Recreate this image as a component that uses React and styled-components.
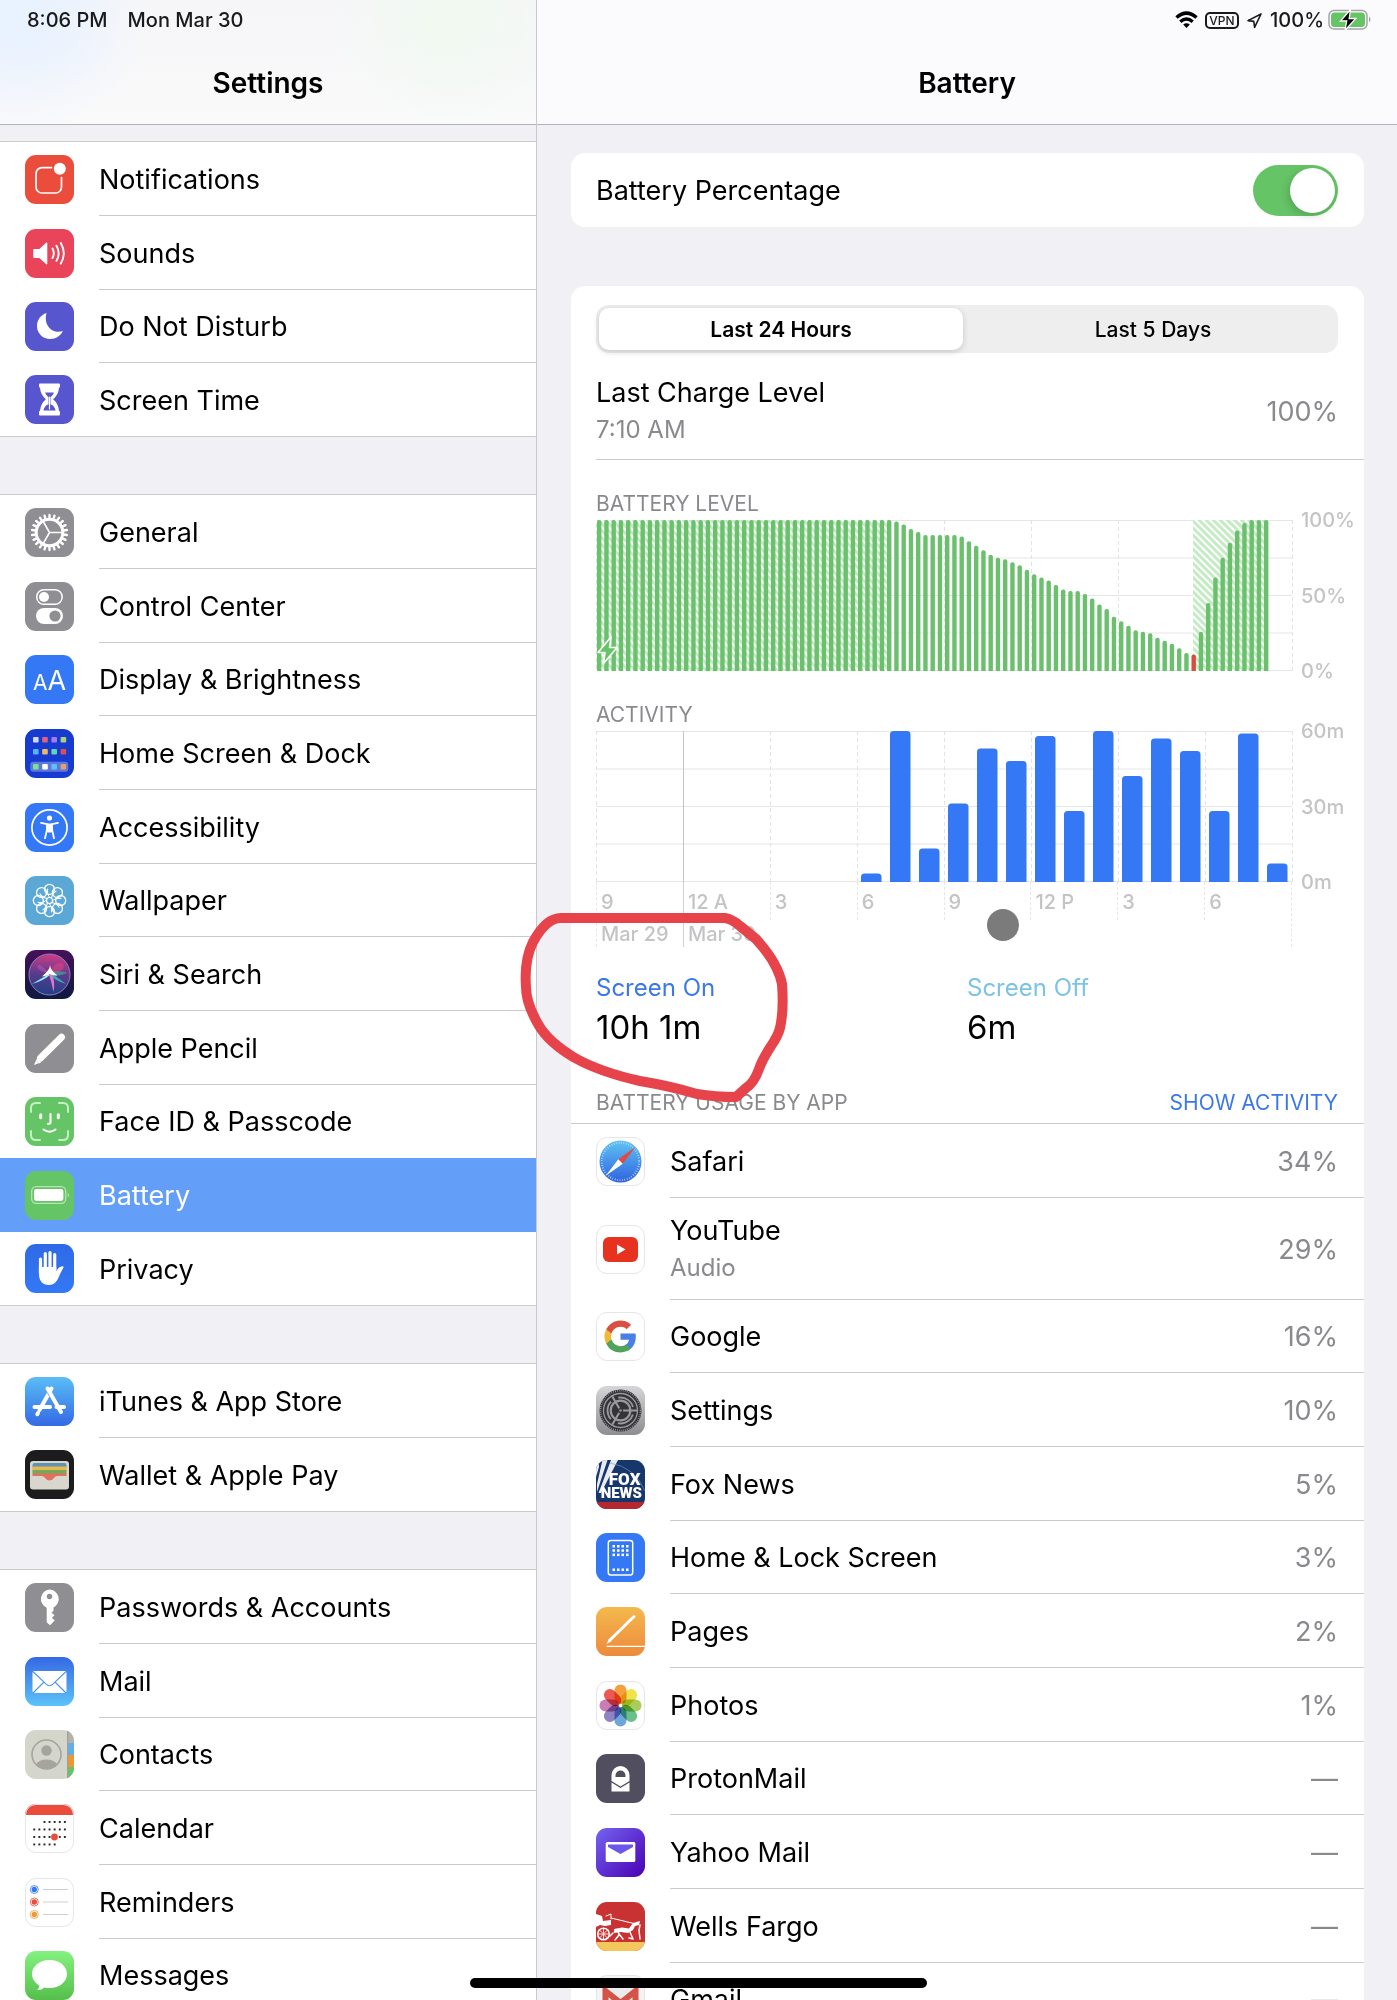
import React, { useState } from 'react';
import styled, { createGlobalStyle, css } from 'styled-components';

const color = {
  page: '#f0f0f5',
  line: '#cbcbce',
  headerLine: '#b3b2b8',
  text: '#000',
  muted: '#8a8a8e',
  axis: '#c4c4c6',
  blue: '#3478f6',
  link: '#3b78e7',
  sky: '#7cc3e6',
  green: '#65c466',
  red: '#eb4d3d',
};

const GlobalStyle = createGlobalStyle`
  *, *::before, *::after { box-sizing: border-box; }
  body { margin: 0; background: ${color.page}; }
  ul { list-style: none; margin: 0; padding: 0; }
  h1, h2, p, dl, dd, dt, fieldset { margin: 0; padding: 0; border: 0; font-weight: inherit; }
`;

/* ---------- layout ---------- */

const Screen = styled.div`
  position: relative;
  display: grid;
  grid-template-columns: 537px minmax(0, 1fr);
  height: 100vh;
  overflow: hidden;
  font-family: Inter, "Liberation Sans", sans-serif;
  font-size: 27px;
  color: ${color.text};
`;

const Pane = styled.div`
  display: flex;
  flex-direction: column;
  min-width: 0;
  min-height: 0;
`;

const SidebarPane = styled(Pane)`
  border-right: 1px solid #c9c9cd;
`;

const Scroll = styled.div`
  flex: 1;
  min-height: 0;
  overflow-y: auto;
  scrollbar-width: none;
`;

const Header = styled.header`
  flex: none;
  border-bottom: 1px solid ${color.headerLine};
  background: #fbfafc;
`;

const TintedHeader = styled(Header)`
  background:
    radial-gradient(ellipse 130px 110px at 20px 20px, #e9f2ff 20%, transparent),
    radial-gradient(ellipse 120px 110px at 450px 20px, #f1f9f1 20%, transparent),
    linear-gradient(#f6f6f8, #fafafb);
`;

const StatusBar = styled.div`
  display: flex;
  align-items: center;
  justify-content: ${(p) => (p.$end ? 'flex-end' : 'flex-start')};
  gap: ${(p) => (p.$end ? '7px' : '20px')};
  height: 40px;
  padding: 0 25px 0 27px;
  font-size: 20px;
  font-weight: 500;
  color: #1a1a1c;
  white-space: nowrap;
`;

const BatteryStatus = styled.span`
  display: flex;
  align-items: center;
  gap: 4px;
`;

const Title = styled.h1`
  padding-top: 2px;
  font-size: 28px;
  font-weight: 600;
  line-height: 82px;
  text-align: center;
`;

/* ---------- sidebar ---------- */

const Nav = styled.nav`
  display: flex;
  flex-direction: column;
  gap: 57px;
  padding-top: 16px;
`;

const Group = styled.ul`
  border-top: 1px solid ${color.line};
  background: #fff;
`;

const rowRhythm = css`
  height: 74px;
  &:nth-child(3n) { height: 73px; }
`;

const NavLabel = styled.span`
  display: flex;
  flex: 1;
  align-items: center;
  align-self: stretch;
  padding-top: 1px;
  border-bottom: 1px solid ${color.line};
  white-space: nowrap;
`;

const NavItem = styled.li`
  ${rowRhythm}
  &:last-child { border-bottom: 1px solid ${color.line}; }
  &:last-child ${NavLabel} { border-bottom: 0; }
  &:has(+ li > a[aria-current]) ${NavLabel} { border-color: transparent; }
`;

const NavLink = styled.a`
  display: flex;
  align-items: center;
  gap: 25px;
  height: 100%;
  padding-left: 25px;
  color: inherit;
  text-decoration: none;
  &[aria-current] { background: #639ff8; color: #fff; }
  &[aria-current] ${NavLabel} { border-color: transparent; }
`;

const IconSvg = styled.svg`
  display: block;
  flex: none;
  width: 49px;
  height: 49px;
`;

/* ---------- detail ---------- */

const Detail = styled.main`
  display: flex;
  flex-direction: column;
  gap: 59px;
  padding: 28px 33px 0 34px;
`;

const Card = styled.section`
  border-radius: 14px;
  background: #fff;
`;

const ToggleRow = styled.label`
  display: flex;
  align-items: center;
  justify-content: space-between;
  height: 74px;
  padding: 0 26px 0 25px;
`;

const Switch = styled.input.attrs({ type: 'checkbox', role: 'switch' })`
  appearance: none;
  display: flex;
  justify-content: flex-start;
  width: 85px;
  height: 51px;
  margin: 0;
  padding: 3px;
  border-radius: 26px;
  background: #e9e9ea;
  &::before {
    content: '';
    width: 45px;
    height: 45px;
    border-radius: 50%;
    background: #fff;
    box-shadow: -2px 3px 8px rgba(0, 0, 0, 0.16);
  }
  &:checked { justify-content: flex-end; background: ${color.green}; }
`;

const Usage = styled(Card)`
  padding-top: 19px;
`;

const Segments = styled.fieldset`
  display: grid;
  grid-template-columns: 1fr 1fr;
  column-gap: 8px;
  height: 48px;
  margin: 0 26px 0 25px;
  padding: 3px;
  border-radius: 13px;
  background: #eeeeef;
`;

const Segment = styled.label`
  display: flex;
  align-items: center;
  justify-content: center;
  border-radius: 10px;
  font-size: 21px;
  font-weight: 500;
  &:has(input:checked) {
    background: #fff;
    box-shadow: 0 2px 6px rgba(0, 0, 0, 0.16);
    font-weight: 600;
  }
  input { position: absolute; opacity: 0; }
`;

const Charge = styled.div`
  display: flex;
  align-items: center;
  justify-content: space-between;
  margin-left: 25px;
  padding: 21px 26px 11px 0;
  border-bottom: 1px solid ${color.line};
`;

const Name = styled.p`
  line-height: ${(p) => (p.$tall ? '38px' : 'inherit')};
`;

const Sub = styled.p`
  font-size: 24px;
  line-height: 36px;
  color: ${color.muted};
`;

const Value = styled.span`
  color: ${color.muted};
`;

const ChartBlock = styled.div`
  padding: 30px 0 0 25px;
`;

const Caption = styled.h2`
  font-size: 21px;
  line-height: ${(p) => (p.$tall ? '36px' : '28px')};
  color: ${color.muted};
`;

const ChartGrid = styled.div`
  display: grid;
  grid-template-columns: minmax(0, 1fr) 63px;
  column-gap: 9px;
  margin-top: 2px;
`;

const Plot = styled.svg`
  display: block;
  width: 100%;
  height: 151px;
  overflow: visible;
`;

const Scale = styled.div`
  display: flex;
  flex-direction: column;
  justify-content: space-between;
  height: 175px;
  margin: -12px 0;
  font-size: 20px;
  font-weight: 500;
  line-height: 24px;
  color: ${color.axis};
`;

const Axis = styled.div`
  display: grid;
  grid-template-columns: repeat(8, 1fr);
  border-right: 1px dashed #e6e6e8;
  font-size: 20px;
  font-weight: 500;
  color: ${color.axis};
`;

const Tick = styled.div`
  height: ${(p) => (p.$short ? '38px' : '65px')};
  padding-left: 4px;
  border-left: 1px ${(p) => (p.$solid ? 'solid #d2d2d4' : 'dashed #e6e6e8')};
  line-height: 40px;
  white-space: nowrap;
`;

const TickDate = styled.div`
  line-height: 25px;
`;

const Totals = styled.dl`
  display: grid;
  grid-template-columns: 1fr 1fr;
  padding: 24px 26px 36px 25px;
`;

const TotalLabel = styled.dt`
  font-size: 24px;
  line-height: 34px;
  color: ${(p) => p.$color};
`;

const TotalValue = styled.dd`
  font-size: 33px;
  line-height: 44px;
`;

const ListHead = styled.div`
  display: flex;
  align-items: center;
  justify-content: space-between;
  padding: 0 26px 2px 25px;
  border-bottom: 1px solid ${color.line};
`;

const TextButton = styled.button`
  padding: 0;
  border: 0;
  background: none;
  font: inherit;
  font-size: 21px;
  line-height: 36px;
  color: ${color.link};
`;

const AppBody = styled.div`
  display: flex;
  flex: 1;
  align-items: center;
  justify-content: space-between;
  align-self: stretch;
  padding: 1px 26px 0 0;
  border-bottom: 1px solid ${color.line};
`;

const AppRow = styled.li`
  display: flex;
  align-items: center;
  gap: 25px;
  padding-left: 25px;
  ${(p) => (p.$double ? 'height: 102px;' : rowRhythm)}
`;

/* ---------- overlays ---------- */

const PenMark = styled.svg`
  position: absolute;
  top: 905px;
  left: 515px;
  width: 280px;
  height: 205px;
  pointer-events: none;
`;

const Pointer = styled.div`
  position: absolute;
  top: 909px;
  left: 987px;
  width: 32px;
  height: 32px;
  border-radius: 50%;
  background: #7b7b7b;
`;

const HomeBar = styled.div`
  position: absolute;
  bottom: 12px;
  left: 50%;
  width: 457px;
  height: 10px;
  margin-left: -229px;
  border-radius: 5px;
  background: #000;
`;

/* ---------- icons ---------- */

const range = (n) => Array.from({ length: n }, (_, i) => i);

const W = '#fff';
const stroke = (width, extra) => ({
  fill: 'none',
  stroke: W,
  strokeWidth: width,
  strokeLinecap: 'round',
  strokeLinejoin: 'round',
  ...extra,
});

const icons = {
  notifications: [color.red, (
    <>
      <path d="M26.500 12.700H17a6 6 0 0 0-6 6V32a6 6 0 0 0 6 6h13.500a6 6 0 0 0 6-6v-9.500" {...stroke(1.700)} />
      <circle cx="34.800" cy="13.700" r="6" fill={W} />
    </>
  )],
  sounds: ['#ea445a', (
    <>
      <path d="M9.500 20h4.800l7-6.400q1-.6 1 .6v20.400q0 1.200-1 .6l-7-6.200H9.500q-1.300 0-1.300-1.300v-6.400q0-1.300 1.300-1.300z" fill={W} />
      <path d="M27.500 19.500q2.600 4.800 0 9.600M31.500 16.700q4.300 7.600 0 15.200M35.800 14q6 10.300 0 20.600" {...stroke(1.900)} />
    </>
  )],
  dnd: ['#5756ce', <path d="M21.500 11C16 12.800 12 17.800 12 24a13 13 0 0 0 13 13c6 0 10.800-3.300 12.800-8-9.500 3.500-19.800-5-16.300-18z" fill={W} />],
  screentime: ['#5756ce', (
    <>
      <path d="M15 8.500h19q1 0 1 1v2q0 1-1 1.300-.4 6.800-5.900 11.500 5.500 4.700 5.900 11.500 1 .3 1 1.300v2.400q0 1-1 1H15q-1 0-1-1v-2.400q0-1 1-1.300.4-6.800 5.900-11.500-5.500-4.700-5.900-11.500-1-.3-1-1.300v-2q0-1 1-1z" fill={W} />
      <path d="M20 17.500h9q-.7 2.200-3.500 4.800v7q2.900.8 4.200 3.600l1 2.600H18.300l1-2.600q1.300-2.800 4.200-3.600v-7q-2.800-2.600-3.500-4.800z" fill="#5756ce" />
      <path d="M24.500 22v12" {...stroke(1.200)} />
    </>
  )],
  general: ['#8e8e93', (
    <>
      <circle cx="24.500" cy="24.500" r="13.300" {...stroke(3)} />
      <path d="M24.500 24.500h12M24.500 24.500l-6.200-10.800M24.500 24.500l-6.200 10.800" {...stroke(1.700)} />
      {range(22).map((i) => (
        <path key={i} d="M24.500 10.500v-3.600" transform={`rotate(${(i * 360) / 22} 24.500 24.500)`} {...stroke(2.400)} />
      ))}
    </>
  )],
  control: ['#8e8e93', (
    <>
      <rect x="11.700" y="7.700" width="25.500" height="14.600" rx="7.300" {...stroke(1.500)} />
      <circle cx="19" cy="15" r="5" fill={W} />
      <rect x="11" y="26" width="27" height="16" rx="8" fill={W} />
      <circle cx="30" cy="34" r="5.600" fill="#8e8e93" />
    </>
  )],
  display: [color.blue, (
    <g fill={W} fontFamily="Inter, sans-serif">
      <text x="8" y="34.500" fontSize="21">A</text>
      <text x="22.500" y="34.500" fontSize="27">A</text>
    </g>
  )],
  home: ['#173bd0', (
    <>
      <rect x="5.300" y="32.700" width="38" height="10" rx="3" fill="#5b78dd" />
      {['#d5d9ee', '#e0617c', '#a479f5', '#a8d27b', '#55b4f0', '#f0b860', '#66d3b5', '#d94f52', '#82e088', '#fff', '#5fc1f3', '#e7a06d'].map((c, i) => (
        <rect key={i} x={8 + (i % 4) * 9.200} y={[8, 20, 35][Math.floor(i / 4)]} width="5.600" height="5.600" rx="1" fill={c} />
      ))}
    </>
  )],
  accessibility: [color.blue, (
    <>
      <circle cx="24.500" cy="24.500" r="17.600" {...stroke(1.700)} />
      <circle cx="24.500" cy="15" r="2.600" fill={W} />
      <path d="M16 19.800l6 1.300v5.400l-2 8.700M33 19.800l-6 1.300v5.400l2 8.700" {...stroke(1.800)} />
      <path d="M21.500 20.500h6v6l-1 3h-4l-1-3z" fill={W} />
    </>
  )],
  wallpaper: ['#5ba8d6', (
    <>
      {range(8).map((i) => (
        <g key={i} transform={`rotate(${i * 45} 24.500 24.500)`}>
          <circle cx="24.500" cy="13.300" r="5" {...stroke(1.300)} />
          <path d="M24.500 21.500q-3-3.500-2-8.500" {...stroke(1)} />
        </g>
      ))}
      <circle cx="24.500" cy="24.500" r="3" {...stroke(1.200)} />
    </>
  )],
  siri: ['url(#siriBg)', (
    <>
      <circle cx="24.500" cy="24.500" r="20.500" fill="url(#siriOrb)" stroke="#8d83b5" strokeWidth="1" />
      <path d="M24 23C17 16 15 14 13 15c-3 3 4 8 11 8z" fill="#b45bb8" opacity=".5" />
      <path d="M25 24Q30 9 38 14q4 7-13 10z" fill="#e33f86" opacity=".6" />
      <path d="M25 23Q19 27 7 34q11-3 18-9z" fill="#8ef0f2" />
      <path d="M24 22q7 4 17 12-10-3-17-9z" fill="#37a9b4" />
      <path d="M24 22q13-2 18 1-9 4-18 2z" fill="#3ea89c" opacity=".7" />
      <path d="M23.500 23q3 8 5 19 2-11-2-18z" fill="#e07ad0" />
      <path d="M25 15q0 5-8 11.500 4-.5 7.500-2.500 3 1.500 8 1.500-7-5-7.500-10.500z" fill={W} />
    </>
  )],
  pencil: ['#8e8e93', (
    <>
      <path d="M15.500 34L36.500 13.200" {...stroke(7)} />
      <path d="M9 41l2-4.500 2.600 2.700z" fill={W} />
      <path d="M12 34.500l4 4-2 1-3-3z" fill={W} />
    </>
  )],
  faceid: [color.green, (
    <>
      <path d="M6 15v-4q0-5 5-5h4M34 6h4q5 0 5 5v4M43 34v4q0 5-5 5h-4M15 43h-4q-5 0-5-5v-4" {...stroke(2, { stroke: '#c5f0c3' })} />
      <path d="M15.700 17.700v3M33.300 17.700v3" {...stroke(3)} />
      <path d="M25.500 17v8.300q0 1.600-2.500 1.600M18.500 32.500q6 4.500 12 0" {...stroke(2.100)} />
    </>
  )],
  battery: [color.green, (
    <>
      <rect x="6.700" y="15.700" width="34" height="16.600" rx="4.500" {...stroke(1.300, { stroke: '#b5e5b2' })} />
      <rect x="9" y="18" width="29.400" height="12" rx="2.400" fill={W} />
      <path d="M42.700 21.500q2.600 2.500 0 5z" fill="#b5e5b2" />
    </>
  )],
  privacy: ['url(#bluePrivacy)', (
    <>
      <path d="M15.500 15v14M20.300 9.500V27M25 8.500V27M29.700 10.500V28" {...stroke(3.200)} />
      <path d="M13.900 23h17.400v4.500q2.300-4.800 6-5.200 1.700 0 1.100 1.500-3 5.200-4.400 8.700-3 8.500-10 8.500-10.100 0-10.100-12z" fill={W} />
    </>
  )],
  appstore: ['url(#skyDown)', (
    <>
      <path d="M26.500 11.500L14.500 33M22.500 11.500L36 35" {...stroke(4)} />
      <path d="M9.500 30h15.500M31.500 30h7.500M13 36l-.7 1.200" {...stroke(4)} />
      <path d="M21.500 14.500l3 5" stroke="#4da2f5" strokeWidth=".8" />
    </>
  )],
  wallet: ['#1c1c1e', (
    <>
      <rect x="5" y="11" width="39" height="28.500" rx="3" fill="#d9d6cd" />
      <rect x="7.500" y="13" width="34" height="6" rx="2" fill="#5d94b5" />
      <rect x="7.500" y="16.500" width="34" height="5" fill="#e8b84c" />
      <rect x="7.500" y="20" width="34" height="4" fill="#73a95a" />
      <path d="M7.500 23.500h34v2.500h-9q-2.500 0-3.500 2-4.500 5-9 0-1-2-3.500-2h-9z" fill="#e2705a" />
    </>
  )],
  passwords: ['#8e8e93', (
    <>
      <path d="M24.500 6.500a9.500 9.500 0 0 1 4 18v3.500l-2 1.500 3 2.800-2.600 2.400 2.800 2.800-4.700 4.700-3.300-3V24.700a9.500 9.500 0 0 1 2.800-18.200z" fill={W} />
      <circle cx="24.500" cy="13.500" r="2.700" fill="#8e8e93" />
    </>
  )],
  mail: ['url(#skyUp)', (
    <>
      <rect x="7.500" y="14" width="34" height="22" rx="2" fill={W} />
      <path d="M8.500 15l12.600 12.200q3.400 3 6.800 0L40.500 15M8.500 35.500l10-10M40.500 35.500l-10-10" {...stroke(1.100, { stroke: '#4a95e8' })} />
    </>
  )],
  contacts: ['#d5d6cb', (
    <>
      <rect x="43" y="0" width="6" height="13" fill="#b5b2ab" />
      <rect x="43" y="13" width="6" height="12" fill="#5fb0ea" />
      <rect x="43" y="25" width="6" height="12" fill="#ef9532" />
      <rect x="43" y="37" width="6" height="12" fill="#62c466" />
      <rect x="42" y="0" width="1.300" height="49" fill="#9fa097" />
      <circle cx="21.500" cy="24.500" r="14.500" {...stroke(1.600, { stroke: '#a5a49d' })} />
      <circle cx="21.500" cy="20.500" r="5.200" fill="#a5a49d" />
      <path d="M11 34.500q3-5 10.500-5t10.500 5q-4 4.500-10.500 4.500T11 34.500z" fill="#a5a49d" />
    </>
  )],
  calendar: [W, (
    <>
      <rect width="49" height="11" fill={color.red} />
      {[[2, 6], [0, 6], [0, 6], [0, 4]].map(([from, to], row) => range(to - from + 1).map((i) => (
        <rect key={`${row}-${i}`} x={8.300 + (i + from) * 5.100} y={17 + row * 7.500} width="1.900" height="1.900" fill="#222" />
      )))}
      <circle cx="29.500" cy="33" r="3.400" fill={color.red} />
    </>
  ), true],
  reminders: [W, (
    <>
      {[color.blue, color.red, '#f09a37'].map((c, i) => (
        <g key={c}>
          <circle cx="9.300" cy={11.500 + i * 12.500} r="2.700" fill={c} />
          <circle cx="9.300" cy={11.500 + i * 12.500} r="4" fill="none" stroke={c} strokeWidth=".8" />
          <path d={`M18 ${11.500 + i * 12.500}h25`} stroke="#cfcfd2" strokeWidth="1.200" />
        </g>
      ))}
    </>
  ), true],
  messages: ['url(#greenMsg)', <path d="M24.500 9C14.500 9 7 15.300 7 23c0 4.800 3 8.900 7.300 11.400-.2 2-1.100 3.600-2.300 4.700 3.200 0 5.600-1.200 7.200-2.700 1.700.4 3.500.6 5.300.6 10 0 17.500-6.200 17.500-14S34.500 9 24.500 9z" fill={W} />],

  safari: [W, (
    <>
      <circle cx="24.500" cy="24.500" r="21" fill="url(#safariDial)" />
      <circle cx="24.500" cy="24.500" r="18.700" fill="none" stroke="#bfe0fb" strokeWidth="2" strokeDasharray=".7 1.750" />
      <path d="M39.500 10L22.300 22.300l4.400 4.400z" fill="#e5493d" />
      <path d="M9.500 39l17.200-12.300-4.400-4.400z" fill={W} />
    </>
  ), true],
  youtube: [W, (
    <>
      <rect x="7" y="12" width="35" height="25" rx="6" fill="#e6321f" />
      <path d="M21 19.500l8.500 5-8.500 5z" fill={W} />
    </>
  ), true],
  google: [W, (
    <g transform="translate(8.500 8.500) scale(1.333)">
      <path fill="#4a7fe8" d="M23.500 12.270c0-.85-.08-1.670-.22-2.450H12v4.640h6.450a5.500 5.500 0 0 1-2.400 3.620v3h3.880c2.270-2.090 3.570-5.170 3.570-8.810z" />
      <path fill="#4fa35a" d="M12 24c3.240 0 5.960-1.070 7.940-2.910l-3.880-3.010c-1.070.72-2.450 1.150-4.060 1.150-3.130 0-5.780-2.110-6.720-4.950H1.270v3.110A12 12 0 0 0 12 24z" />
      <path fill="#f0b93a" d="M5.280 14.280a7.200 7.200 0 0 1 0-4.560V6.610H1.270a12 12 0 0 0 0 10.780z" />
      <path fill="#d94f42" d="M12 4.770c1.760 0 3.350.6 4.600 1.800l3.440-3.450A12 12 0 0 0 1.270 6.610l4.010 3.110C6.220 6.880 8.870 4.770 12 4.770z" />
    </g>
  ), true],
  settings: ['url(#steel)', (
    <>
      <circle cx="24.500" cy="24.500" r="21" fill="#333338" />
      <circle cx="24.500" cy="24.500" r="20" fill="none" stroke="#9a9a9e" strokeWidth="1.800" strokeDasharray=".8 1.200" />
      <circle cx="24.500" cy="24.500" r="17" fill="none" stroke="#9a9a9e" strokeWidth="1.300" />
      <circle cx="24.500" cy="24.500" r="9.800" fill="none" stroke="#9a9a9e" strokeWidth="2.200" />
      <circle cx="24.500" cy="24.500" r="13" fill="none" stroke="#9a9a9e" strokeWidth="1.800" strokeDasharray="19 8.230" strokeDashoffset="-4" />
      <path d="M24.500 24.500h16.500M24.500 24.500l-8.300-14.300M24.500 24.500l-8.300 14.300" stroke="#9a9a9e" strokeWidth="2" />
      <circle cx="24.500" cy="24.500" r="2.600" fill="#333338" />
      <circle cx="24.500" cy="24.500" r="1.200" fill="#9a9a9e" />
    </>
  )],
  fox: ['#17376c', (
    <>
      <path d="M6.500 0h5L1 32v-8zM15 0h7L5 33H2.500zM0 8l3-7v6L0 17z" fill={W} opacity=".9" />
      <path d="M14 3q25 4 35 28" stroke="#8298bd" strokeWidth=".6" fill="none" />
      <rect y="42" width="49" height="7" fill="#b3292e" />
      <g fill={W} fontFamily="Roboto, sans-serif" fontWeight="900" textAnchor="end">
        <text x="44.500" y="24.500" fontSize="17">FOX</text>
        <text x="46" y="37.800" fontSize="15">NEWS</text>
      </g>
    </>
  )],
  homelock: [color.blue, (
    <>
      <rect x="12.300" y="7.500" width="24.400" height="34.500" rx="2.500" {...stroke(1.500)} />
      {range(16).map((i) => (
        <rect key={i} x={16.500 + (i % 4) * 4.500} y={i < 12 ? 12 + Math.floor(i / 4) * 4.300 : 35.500} width="2.500" height="2.500" fill={W} />
      ))}
    </>
  )],
  pages: ['url(#orange)', (
    <>
      <path d="M10.500 39.300H49" stroke={W} strokeWidth="1.300" />
      <path d="M14 33L38 9.500" {...stroke(3)} />
      <path d="M10.500 37l2.400-5.200 2.700 2.500z" fill={W} />
    </>
  )],
  photos: [W, (
    <g style={{ isolation: 'isolate' }}>
      {['#f2a13c', '#efe24a', '#a9cd5a', '#6bbf8c', '#6ea6dc', '#8f83c4', '#c77db5', '#ea5a52'].map((c, i) => (
        <rect key={c} x="18.500" y="3.500" width="12" height="19.500" rx="6" fill={c} transform={`rotate(${i * 45} 24.500 24.500)`} style={{ mixBlendMode: 'multiply' }} />
      ))}
      <circle cx="24.500" cy="24.500" r="1.300" fill={W} />
    </g>
  ), true],
  proton: ['#514f5f', (
    <>
      <path d="M15.500 27v-5.500a9 9.500 0 0 1 18 0V27l-9 5.500z" fill={W} />
      <path d="M19.500 23v-1.500a5 5 0 0 1 10 0V23z" fill="#514f5f" />
      <path d="M15.500 28.500l9 5.500 9-5.500v9h-18z" fill={W} />
    </>
  )],
  yahoo: ['url(#purple)', (
    <>
      <rect x="9.700" y="14" width="29.600" height="20" rx="1.500" fill={W} />
      <path d="M12 16.500h25L37 19l-12.500 7L12 19z" fill="#6b57ea" />
    </>
  )],
  wells: ['#c83232', (
    <>
      <rect y="40" width="49" height="9" fill="#f3c75c" />
      <g {...stroke(1.500)}>
        <circle cx="7.500" cy="32" r="5.800" />
        <path d="M2 32h11M7.500 26.500v11M3.500 28l8 8M11.500 28l-8 8" strokeWidth=".8" />
        <path d="M10 14l5-2v5M15 16l25 6" strokeWidth="1" />
        <path d="M19 38l4-5-1-5M27 37l-4-5M33 36l4 1-3-7M44 37l-1-9 1-5M17 31l-3 3" />
      </g>
      <path d="M0 12l6 2 1 5 8-1v5l-6 1-5-1-4 2z" fill={W} />
      <path d="M18 27l8-1.500 7 1 4-5.500 7-2-1 4-4 1-2 4-5 3-7-1-7 1z" fill={W} />
    </>
  )],
  gmail: ['#f4f4f4', (
    <>
      <path d="M6.500 13h36v27h-36z" fill="#ececec" />
      <path d="M9.500 40V16l15 12 15-12v24" {...stroke(6, { stroke: '#d55247', strokeLinecap: 'butt', strokeLinejoin: 'miter' })} />
    </>
  ), true],
};

const gradients = [
  ['siriBg', '#46105a', '#0c1a40'],
  ['bluePrivacy', '#2f6ae6', '#3478f6'],
  ['skyDown', '#5abdf6', '#3469e4'],
  ['skyUp', '#3568e4', '#5cc3f8'],
  ['greenMsg', '#84f27f', '#55bf4a'],
  ['safariDial', '#5fc3f3', '#2f63e0'],
  ['steel', '#d6d6d8', '#8e8e92'],
  ['orange', '#f4b94d', '#ed8a3c'],
];

function IconDefs() {
  return (
    <svg width="0" height="0" aria-hidden="true" style={{ position: 'absolute' }}>
      <defs>
        {gradients.map(([id, from, to]) => (
          <linearGradient key={id} id={id} x1="0" y1="0" x2="0" y2="1">
            <stop offset="0" stopColor={from} />
            <stop offset="1" stopColor={to} />
          </linearGradient>
        ))}
        <linearGradient id="purple" x1="0" y1="0" x2="1" y2="1">
          <stop offset="0" stopColor="#7463f0" />
          <stop offset="1" stopColor="#4a00b4" />
        </linearGradient>
        <linearGradient id="siriOrb" x1=".5" y1="0" x2=".4" y2="1">
          <stop offset="0" stopColor="#d13b86" />
          <stop offset=".5" stopColor="#5a3b8c" />
          <stop offset="1" stopColor="#1f3f86" />
        </linearGradient>
        <clipPath id="tile"><rect width="49" height="49" rx="11" /></clipPath>
        <pattern id="hatch" width="5" height="5" patternUnits="userSpaceOnUse" patternTransform="rotate(-45)">
          <rect width="5" height="5" fill="#fff" />
          <rect width="3" height="5" fill="#c5ebc5" />
        </pattern>
      </defs>
    </svg>
  );
}

function Icon({ name }) {
  const [bg, glyph, outlined] = icons[name];
  return (
    <IconSvg viewBox="0 0 49 49" aria-hidden="true">
      <g clipPath="url(#tile)">
        <rect width="49" height="49" fill={bg} />
        {glyph}
      </g>
      {outlined && <rect x=".5" y=".5" width="48" height="48" rx="10.500" fill="none" stroke="#e6e6ea" />}
    </IconSvg>
  );
}

/* ---------- data ---------- */

const navGroups = [
  [['notifications', 'Notifications'], ['sounds', 'Sounds'], ['dnd', 'Do Not Disturb'], ['screentime', 'Screen Time']],
  [
    ['general', 'General'], ['control', 'Control Center'], ['display', 'Display & Brightness'],
    ['home', 'Home Screen & Dock'], ['accessibility', 'Accessibility'], ['wallpaper', 'Wallpaper'],
    ['siri', 'Siri & Search'], ['pencil', 'Apple Pencil'], ['faceid', 'Face ID & Passcode'],
    ['battery', 'Battery'], ['privacy', 'Privacy'],
  ],
  [['appstore', 'iTunes & App Store'], ['wallet', 'Wallet & Apple Pay']],
  [
    ['passwords', 'Passwords & Accounts'], ['mail', 'Mail'], ['contacts', 'Contacts'],
    ['calendar', 'Calendar'], ['reminders', 'Reminders'], ['messages', 'Messages'],
  ],
];

const apps = [
  ['safari', 'Safari', '34%'],
  ['youtube', 'YouTube', '29%', 'Audio'],
  ['google', 'Google', '16%'],
  ['settings', 'Settings', '10%'],
  ['fox', 'Fox News', '5%'],
  ['homelock', 'Home & Lock Screen', '3%'],
  ['pages', 'Pages', '2%'],
  ['photos', 'Photos', '1%'],
  ['proton', 'ProtonMail', '—'],
  ['yahoo', 'Yahoo Mail', '—'],
  ['wells', 'Wells Fargo', '—'],
  ['gmail', 'Gmail', '—'],
];

const levels = [
  ...Array(41).fill(100),
  99, 97, 94, 92, 90, 90, 90, 90, 90, 89, 86, 83, 80, 77, 75, 74, 72, 70, 67, 64, 62, 60, 57, 54, 53, 53,
  51, 48, 44, 41, 36, 33, 30, 27, 26, 25, 22, 20, 18, 15, 12, 11, 26, 45, 62, 75, 85, 93, 98, 100, 100, 100,
];
const lowIndex = 82;

const activity = [0, 0, 0, 0, 0, 0, 0, 0, 0, 3, 60, 13, 31, 53, 48, 58, 28, 60, 42, 57, 52, 28, 59, 7];

const ticks = [
  { hour: '9', date: 'Mar 29' },
  { hour: '12 A', date: 'Mar 30', solid: true },
  { hour: '3' }, { hour: '6' }, { hour: '9' }, { hour: '12 P' }, { hour: '3' }, { hour: '6' },
];

/* ---------- charts ---------- */

const PLOT_W = 696;
const PLOT_H = 151;

function GridLines({ midnight }) {
  return (
    <g fill="none" stroke="#e6e6e8">
      {range(5).map((i) => <path key={i} d={`M0 ${0.5 + (i * (PLOT_H - 1)) / 4}H${PLOT_W}`} />)}
      {range(9).map((i) => (
        <path
          key={i}
          d={`M${i * 87 + 0.5} 0V${PLOT_H}`}
          stroke={midnight && i === 1 ? '#c6c6c8' : '#e2e2e4'}
          strokeDasharray={midnight && i === 1 ? undefined : '4 3'}
        />
      ))}
    </g>
  );
}

const barPath = (x, w, h, r) =>
  `M${x} ${PLOT_H}v${-(h - r)}q0 ${-r} ${r} ${-r}h${w - 2 * r}q${r} 0 ${r} ${r}v${h - r}z`;

function BatteryChart() {
  return (
    <Plot viewBox={`0 0 ${PLOT_W} ${PLOT_H}`} preserveAspectRatio="none" role="img" aria-label="Battery level">
      <GridLines />
      <rect width="295" height={PLOT_H} fill="url(#hatch)" />
      <rect x="597" width="74" height={PLOT_H} fill="url(#hatch)" />
      {levels.map((v, i) => (
        <path key={i} d={barPath(1 + i * 7.250, 4.400, (v / 100) * PLOT_H, 2)} fill={i === lowIndex ? '#dc4b41' : '#6ac06d'} />
      ))}
      <path d="M15 117L2 132.500h7l-1.500 11L21 127.500h-7.500z" fill={color.green} stroke="#fff" strokeWidth="1.600" strokeLinejoin="round" />
    </Plot>
  );
}

function ActivityChart() {
  return (
    <Plot viewBox={`0 0 ${PLOT_W} ${PLOT_H}`} preserveAspectRatio="none" role="img" aria-label="Activity">
      <GridLines midnight />
      {activity.map((v, i) => v > 0 && (
        <path key={i} d={barPath(4 + i * 29, 20.500, v * 2.500 + 1, 3.500)} fill={color.blue} />
      ))}
    </Plot>
  );
}

/* ---------- status icons ---------- */

const VpnBadge = styled.span`
  width: 34px;
  height: 17px;
  border: 2px solid #1a1a1c;
  border-radius: 5px;
  font-size: 12px;
  font-weight: 500;
  line-height: 13px;
  text-align: center;
`;

function StatusIcons() {
  return (
    <>
      <svg width="23" height="18" viewBox="0 0 23 18" aria-hidden="true">
        <g fill="none" stroke="#000" strokeWidth="3.400">
          <path d="M1.500 6.600Q11.500-2.400 21.500 6.600" />
          <path d="M5.300 10.800Q11.500 5.400 17.700 10.800" />
        </g>
        <path d="M11.500 17l-3.300-3.400q3.300-2.500 6.600 0z" fill="#000" />
      </svg>
      <VpnBadge>VPN</VpnBadge>
      <svg width="17" height="17" viewBox="0 0 17 17" aria-hidden="true">
        <path d="M15 2L2 8.600l5.800.8.800 6z" fill="none" stroke="#1a1a1c" strokeWidth="1.600" strokeLinejoin="round" />
      </svg>
      <BatteryStatus>
        100%
        <svg width="44" height="22" viewBox="0 0 44 22" aria-hidden="true">
          <rect x="1" y="1.500" width="38" height="18.500" rx="5" fill="#fff" stroke="#a4a4a6" strokeWidth="1.500" />
          <rect x="3" y="3.500" width="34" height="14.500" rx="3.500" fill={color.green} />
          <path d="M41 7.500q3 3 0 6z" fill="#a4a4a6" />
          <path d="M22.500.5L12.500 12h6.200L17 21.500 27.800 9.500h-6.600z" fill="#000" stroke="#fff" strokeWidth="1.300" />
        </svg>
      </BatteryStatus>
    </>
  );
}

/* ---------- page ---------- */

function Sidebar() {
  return (
    <SidebarPane>
      <TintedHeader>
        <StatusBar><span>8:06 PM</span><span>Mon Mar 30</span></StatusBar>
        <Title>Settings</Title>
      </TintedHeader>
      <Scroll>
        <Nav aria-label="Settings">
          {navGroups.map((group, g) => (
            <Group key={g}>
              {group.map(([icon, label]) => (
                <NavItem key={icon}>
                  <NavLink href={`#${icon}`} aria-current={icon === 'battery' ? 'page' : undefined}>
                    <Icon name={icon} />
                    <NavLabel>{label}</NavLabel>
                  </NavLink>
                </NavItem>
              ))}
            </Group>
          ))}
        </Nav>
      </Scroll>
    </SidebarPane>
  );
}

function PeriodPicker() {
  const [period, setPeriod] = useState('24h');
  return (
    <Segments aria-label="Period">
      {[['24h', 'Last 24 Hours'], ['5d', 'Last 5 Days']].map(([id, label]) => (
        <Segment key={id}>
          <input type="radio" name="period" checked={period === id} onChange={() => setPeriod(id)} />
          {label}
        </Segment>
      ))}
    </Segments>
  );
}

function BatteryPane() {
  return (
    <Pane>
      <Header>
        <StatusBar $end><StatusIcons /></StatusBar>
        <Title>Battery</Title>
      </Header>
      <Scroll>
        <Detail>
          <Card>
            <ToggleRow>Battery Percentage<Switch defaultChecked /></ToggleRow>
          </Card>
          <Usage>
            <PeriodPicker />
            <Charge>
              <div>
                <Name $tall>Last Charge Level</Name>
                <Sub>7:10 AM</Sub>
              </div>
              <Value>100%</Value>
            </Charge>
            <ChartBlock>
              <Caption>BATTERY LEVEL</Caption>
              <ChartGrid>
                <BatteryChart />
                <Scale><span>100%</span><span>50%</span><span>0%</span></Scale>
              </ChartGrid>
            </ChartBlock>
            <ChartBlock>
              <Caption>ACTIVITY</Caption>
              <ChartGrid>
                <ActivityChart />
                <Scale><span>60m</span><span>30m</span><span>0m</span></Scale>
                <Axis>
                  {ticks.map(({ hour, date, solid }, i) => (
                    <Tick key={i} $solid={solid} $short={!date}>
                      {hour}
                      {date && <TickDate>{date}</TickDate>}
                    </Tick>
                  ))}
                </Axis>
              </ChartGrid>
            </ChartBlock>
            <Totals>
              <div>
                <TotalLabel $color={color.link}>Screen On</TotalLabel>
                <TotalValue>10h 1m</TotalValue>
              </div>
              <div>
                <TotalLabel $color={color.sky}>Screen Off</TotalLabel>
                <TotalValue>6m</TotalValue>
              </div>
            </Totals>
            <ListHead>
              <Caption $tall>BATTERY USAGE BY APP</Caption>
              <TextButton type="button">SHOW ACTIVITY</TextButton>
            </ListHead>
            <ul>
              {apps.map(([icon, name, share, note]) => (
                <AppRow key={icon} $double={Boolean(note)}>
                  <Icon name={icon} />
                  <AppBody>
                    <div>
                      <Name $tall={Boolean(note)}>{name}</Name>
                      {note && <Sub>{note}</Sub>}
                    </div>
                    <Value>{share}</Value>
                  </AppBody>
                </AppRow>
              ))}
            </ul>
          </Usage>
        </Detail>
      </Scroll>
    </Pane>
  );
}

export default function App() {
  return (
    <Screen>
      <GlobalStyle />
      <IconDefs />
      <Sidebar />
      <BatteryPane />
      <Pointer />
      <PenMark viewBox="515 905 280 205" aria-hidden="true">
        <path
          d="M561 918H725Q732 919 740 926L756 939Q778 963 782 984Q784 1010 780 1028Q778 1036 771 1046Q762 1060 759 1069Q754 1083 746 1088L736 1097Q715 1097 697 1094Q670 1086 640 1081Q600 1072 575 1058Q548 1042 538 1024Q526 1003 526 987Q524 960 533 942Q546 918 561 918Z"
          fill="none"
          stroke="#e6444a"
          strokeWidth="10"
          strokeLinejoin="round"
        />
      </PenMark>
      <HomeBar />
    </Screen>
  );
}
